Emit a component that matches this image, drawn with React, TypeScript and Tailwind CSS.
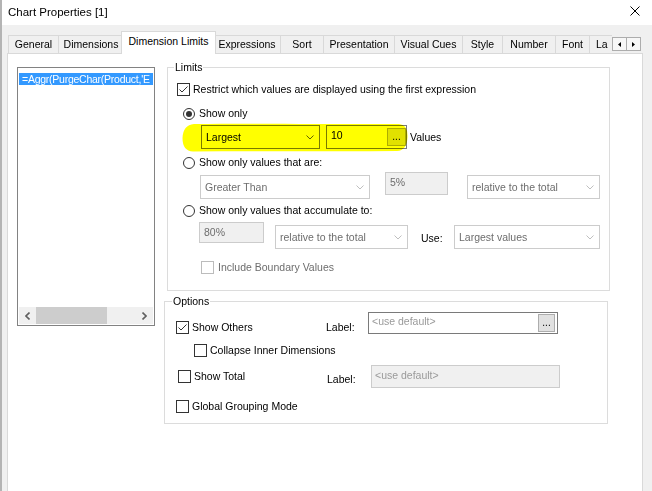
import type { ReactNode } from "react";

type Tab = { label: string; cls: string; active?: boolean };

const tabs: Tab[] = [
  { label: "General", cls: "ml-px w-[51px]" },
  { label: "Dimensions", cls: "-ml-px w-[66px]" },
  { label: "Dimension Limits", cls: "-ml-[3px] w-[95px]", active: true },
  { label: "Expressions", cls: "-ml-[3px] w-[68px]" },
  { label: "Sort", cls: "-ml-px w-[44px]" },
  { label: "Presentation", cls: "-ml-px w-[72px]" },
  { label: "Visual Cues", cls: "-ml-px w-[69px]" },
  { label: "Style", cls: "-ml-px w-[41px]" },
  { label: "Number", cls: "-ml-px w-[54px]" },
  { label: "Font", cls: "-ml-px w-[35px]" },
];

function CheckBox({ checked, disabled }: { checked?: boolean; disabled?: boolean }) {
  return (
    <span
      className={`flex h-[13px] w-[13px] shrink-0 items-center justify-center border bg-white ${
        disabled ? "border-[#bcbcbc]" : "border-[#333333]"
      }`}
    >
      {checked && (
        <svg width="11" height="11" viewBox="0 0 11 11">
          <path d="M1.5 5.5 L4 8 L9.5 2.5" fill="none" stroke="#333333" strokeWidth="1" />
        </svg>
      )}
    </span>
  );
}

function Radio({ checked }: { checked?: boolean }) {
  return (
    <span className="flex h-[12px] w-[12px] shrink-0 items-center justify-center rounded-full border border-[#333333] bg-white">
      {checked && <span className="h-[6px] w-[6px] rounded-full bg-[#333333]" />}
    </span>
  );
}

function Chevron({ color }: { color: string }) {
  return (
    <svg width="8" height="5" viewBox="0 0 8 5" className="shrink-0">
      <polyline points="0.5,0.5 4,4 7.5,0.5" fill="none" stroke={color} strokeWidth="1" />
    </svg>
  );
}

function Combo({ text, w, disabled }: { text: string; w: string; disabled?: boolean }) {
  return (
    <div
      className={`flex h-[24px] shrink-0 items-center border bg-white pl-[4px] pr-[5px] ${w} ${
        disabled ? "border-[#cccccc] text-[#6d6d6d]" : "border-[#7a7a7a] text-black"
      }`}
    >
      <span className="flex-1 truncate">{text}</span>
      <Chevron color={disabled ? "#bfbfbf" : "#606060"} />
    </div>
  );
}

function Dots({ w }: { w: string }) {
  return (
    <span
      className={`flex h-[18px] shrink-0 items-end justify-center border border-[#adadad] bg-[#e1e1e1] pb-[3px] text-[10px] leading-none ${w}`}
    >
      ...
    </span>
  );
}

function Row({ cls, children }: { cls: string; children: ReactNode }) {
  return <div className={`flex ${cls}`}>{children}</div>;
}

export default function App() {
  return (
    <div className="flex h-[491px] w-[652px] flex-col overflow-hidden border-l-2 border-[#b4b4b4] bg-[#f0f0f0] font-['Liberation_Sans',Arial,sans-serif] text-[10.5px] leading-[13px] text-black">
      {/* title bar */}
      <div className="flex h-[25px] shrink-0 items-start bg-white">
        <span className="ml-[6px] mt-[5px] text-[11.5px] leading-[14px]">Chart Properties [1]</span>
        <svg width="10" height="10" viewBox="0 0 10 10" className="ml-auto mr-[12px] mt-[6px]">
          <path d="M0.5 0.5 L9.5 9.5 M9.5 0.5 L0.5 9.5" stroke="#000" strokeWidth="1" />
        </svg>
      </div>

      <div className="flex flex-1 flex-col pl-[5px] pr-[9px]">
        {/* tabs */}
        <div className="flex h-[28px] shrink-0 items-end">
          {tabs.map((t) => (
            <div
              key={t.label}
              className={`flex shrink-0 items-center justify-center whitespace-nowrap border border-b-0 border-[#d9d9d9] ${t.cls} ${
                t.active ? "relative z-10 -mb-px h-[23px] bg-white pb-[3px]" : "h-[18px] bg-[#f0f0f0] pb-px"
              }`}
            >
              {t.label}
            </div>
          ))}
          <div className="-ml-px flex h-[18px] w-[23px] shrink-0 items-center whitespace-nowrap border border-b-0 border-r-0 border-[#d9d9d9] pb-px pl-[6px]">
            La
          </div>
          <div className="mb-[2px] flex shrink-0">
            <span className="flex h-[14px] w-[15px] items-center justify-center border border-[#adadad] bg-[#f7f7f7]">
              <svg width="3" height="5" viewBox="0 0 3 5">
                <path d="M3 0 L0 2.5 L3 5 Z" fill="#000" />
              </svg>
            </span>
            <span className="-ml-px flex h-[14px] w-[15px] items-center justify-center border border-[#adadad] bg-[#f7f7f7]">
              <svg width="3" height="5" viewBox="0 0 3 5">
                <path d="M0 0 L3 2.5 L0 5 Z" fill="#000" />
              </svg>
            </span>
          </div>
        </div>

        {/* tab page */}
        <div className="flex flex-1 items-start border border-b-0 border-[#d9d9d9] bg-white pl-[9px] pt-[13px]">
          {/* dimension list */}
          <div className="flex h-[259px] w-[138px] shrink-0 flex-col border border-[#828282] bg-white p-px">
            <div className="mt-[4px] h-[12px] whitespace-nowrap bg-[#3399ff] pl-[3px] leading-[12px] tracking-[-0.25px] text-white">
              =Aggr(PurgeChar(Product,'E
            </div>
            <div className="mt-auto flex h-[17px] bg-[#f0f0f0]">
              <span className="flex w-[17px] items-center justify-center">
                <svg width="5" height="8" viewBox="0 0 5 8">
                  <polyline points="4.5,0.5 1,4 4.5,7.5" fill="none" stroke="#606060" strokeWidth="1.6" />
                </svg>
              </span>
              <div className="flex-1">
                <div className="h-full w-[71px] bg-[#cdcdcd]" />
              </div>
              <span className="flex w-[17px] items-center justify-center">
                <svg width="5" height="8" viewBox="0 0 5 8">
                  <polyline points="0.5,0.5 4,4 0.5,7.5" fill="none" stroke="#606060" strokeWidth="1.6" />
                </svg>
              </span>
            </div>
          </div>

          <div className="ml-[9px] flex flex-col">
            {/* Limits */}
            <div className="ml-[3px] flex h-[224px] w-[443px] flex-col border border-[#dcdcdc]">
              <span className="-mt-[7px] ml-[6px] self-start bg-white px-px">Limits</span>

              <Row cls="mt-[9px] h-[13px] items-center pl-[9px]">
                <CheckBox checked />
                <span className="ml-[3px] whitespace-nowrap">
                  Restrict which values are displayed using the first expression
                </span>
              </Row>

              <Row cls="mt-[11px] h-[13px] items-center pl-[15px]">
                <Radio checked />
                <span className="ml-[4px]">Show only</span>
              </Row>

              <Row cls="relative mt-[5px] h-[24px] items-center pl-[33px]">
                <Combo text="Largest" w="w-[119px]" />
                <div className="ml-[6px] flex h-[24px] w-[81px] shrink-0 items-center border border-[#7a7a7a] bg-white pl-[4px]">
                  <span className="flex-1 self-start pt-[3px]">10</span>
                  <Dots w="w-[19px]" />
                </div>
                <span className="ml-[3px]">Values</span>
                <svg
                  width="226"
                  height="29"
                  viewBox="0 0 226 29"
                  className="pointer-events-none absolute left-[14px] top-[-2px] mix-blend-multiply"
                >
                  <path
                    d="M12 1 C80 0 160 1.5 217 1 Q226 1.5 225.5 14 Q225 27.5 215 28 C150 29 80 27.5 11 28.5 Q0.5 28 0.5 15 Q1 2 12 1 Z"
                    fill="#ffff00"
                  />
                </svg>
              </Row>

              <Row cls="mt-[7px] h-[13px] items-center pl-[15px]">
                <Radio />
                <span className="ml-[4px]">Show only values that are:</span>
              </Row>

              <Row cls="mt-[3px] items-start">
                <div className="ml-[32px] mt-[3px]">
                  <Combo text="Greater Than" w="w-[170px]" disabled />
                </div>
                <div className="ml-[15px] h-[23px] w-[63px] shrink-0 border border-[#cccccc] bg-[#f0f0f0] pl-[4px] pt-[3px] text-[#6d6d6d]">
                  5%
                </div>
                <div className="ml-[19px] mt-[3px]">
                  <Combo text="relative to the total" w="w-[133px]" disabled />
                </div>
              </Row>

              <Row cls="mt-[5px] h-[13px] items-center pl-[15px]">
                <Radio />
                <span className="ml-[4px]">Show only values that accumulate to:</span>
              </Row>

              <Row cls="mt-[5px] items-start">
                <div className="ml-[31px] h-[21px] w-[65px] shrink-0 border border-[#cccccc] bg-[#f0f0f0] pl-[4px] pt-[3px] text-[#6d6d6d]">
                  80%
                </div>
                <div className="ml-[11px] mt-[3px]">
                  <Combo text="relative to the total" w="w-[133px]" disabled />
                </div>
                <span className="ml-[13px] mt-[10px] w-[33px] shrink-0">Use:</span>
                <div className="mt-[3px]">
                  <Combo text="Largest values" w="w-[146px]" disabled />
                </div>
              </Row>

              <Row cls="mt-[12px] h-[13px] items-center pl-[33px]">
                <CheckBox disabled />
                <span className="ml-[4px] text-[#6d6d6d]">Include Boundary Values</span>
              </Row>
            </div>

            {/* Options */}
            <div className="mt-[10px] flex h-[123px] w-[444px] flex-col border border-[#dcdcdc]">
              <span className="-mt-[7px] ml-[7px] self-start bg-white px-px">Options</span>

              <Row cls="mt-[4px] items-start">
                <div className="ml-[11px] mt-[9px] flex w-[150px] shrink-0 items-center">
                  <CheckBox checked />
                  <span className="ml-[3px]">Show Others</span>
                </div>
                <span className="mt-[9px] w-[42px] shrink-0">Label:</span>
                <div className="flex h-[22px] w-[190px] shrink-0 items-center border border-[#7a7a7a] bg-white pl-[3px] pr-[2px]">
                  <span className="flex-1 self-start pt-[2px] text-[#9a9a9a]">&lt;use default&gt;</span>
                  <Dots w="w-[17px]" />
                </div>
              </Row>

              <Row cls="mt-[10px] h-[13px] items-center pl-[29px]">
                <CheckBox />
                <span className="ml-[3px]">Collapse Inner Dimensions</span>
              </Row>

              <Row cls="mt-[8px] items-start">
                <div className="ml-[13px] mt-[5px] flex w-[149px] shrink-0 items-center">
                  <CheckBox />
                  <span className="ml-[3px]">Show Total</span>
                </div>
                <span className="mt-[8px] w-[44px] shrink-0">Label:</span>
                <div className="h-[23px] w-[189px] shrink-0 border border-[#cccccc] bg-[#f0f0f0] pl-[3px] pt-[3px] text-[#9a9a9a]">
                  &lt;use default&gt;
                </div>
              </Row>

              <Row cls="mt-[12px] h-[13px] items-center pl-[11px]">
                <CheckBox />
                <span className="ml-[3px]">Global Grouping Mode</span>
              </Row>
            </div>
          </div>
        </div>
      </div>
    </div>
  );
}
